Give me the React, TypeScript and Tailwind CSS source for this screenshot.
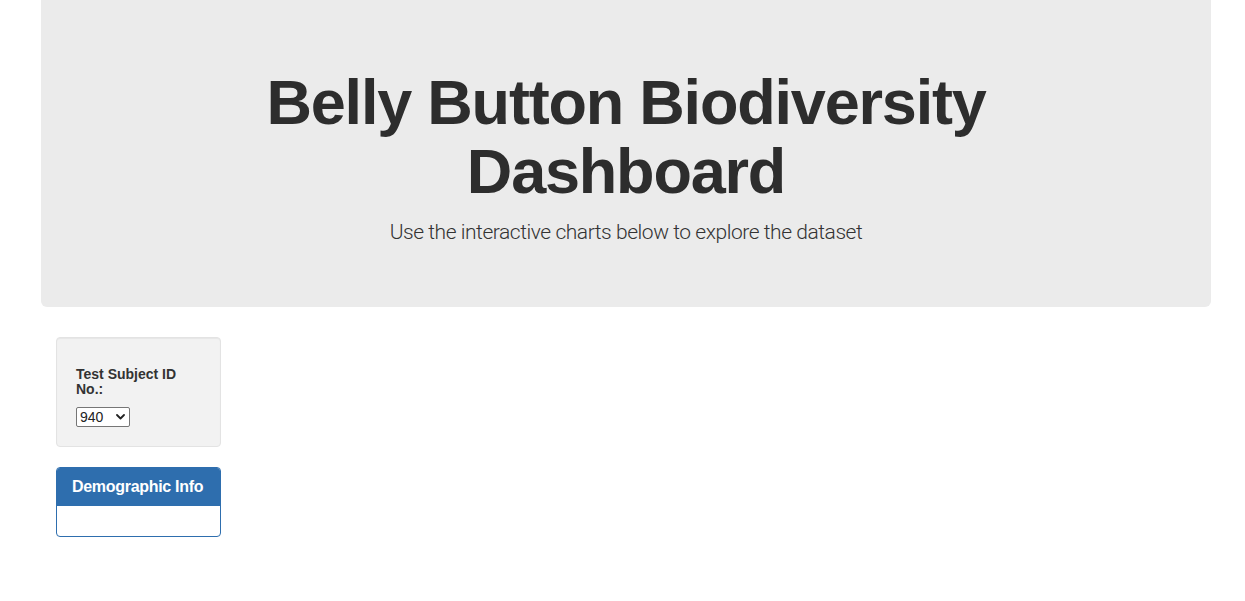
import React from "react";

export default function App() {
  return (
    <div
      className="min-h-[601px] bg-white text-[#333333]"
      style={{ fontFamily: '"Liberation Sans", Arial, sans-serif' }}
    >
      <div className="ml-[41px] w-[1170px]">
        <div className="rounded-b-[6px] bg-[#ebebeb] px-[60px] pt-[48px] pb-[45px] text-center">
          <h1 className="mt-[20px] mb-[10px] text-[63px] leading-[1.1] font-bold tracking-[-1.2px] text-[#2d2d2d]">
            Belly Button Biodiversity
            <br />
            Dashboard
          </h1>
          <p
            className="mb-[15px] text-[21px] leading-[30px] font-light tracking-[-0.45px] text-[#333333]"
            style={{ fontFamily: 'Roboto, "Liberation Sans", sans-serif' }}
          >
            Use the interactive charts below to explore the dataset
          </p>
        </div>
        <div className="mt-[30px] flex px-[15px]">
          <div className="w-[165px]">
            <div className="mb-[20px] rounded-[4px] border border-[#e3e3e3] bg-[#f2f2f2] p-[19px] shadow-[inset_0_1px_1px_rgba(0,0,0,0.05)]">
              <h5 className="mt-[10px] mb-[10px] text-[14px] leading-[1.1] font-bold text-[#333333]">
                Test Subject ID No.:
              </h5>
              <div className="relative flex h-[20px] w-[54px]">
                <select
                  defaultValue="940"
                  className="h-[20px] w-[54px] appearance-none rounded-[2px] border border-[#767676] bg-white pl-[3px] text-[14px] leading-[18px] text-[#222222] outline-none"
                >
                  <option value="940">940</option>
                  <option value="941">941</option>
                  <option value="943">943</option>
                </select>
                <svg
                  className="pointer-events-none absolute top-[7px] right-[5px]"
                  width="9"
                  height="6"
                  viewBox="0 0 9 6"
                >
                  <path
                    d="M1 1 L4.5 4.5 L8 1"
                    fill="none"
                    stroke="#222"
                    strokeWidth="1.8"
                    strokeLinecap="round"
                    strokeLinejoin="round"
                  />
                </svg>
              </div>
            </div>
            <div className="rounded-[4px] border border-[#2e6eae] bg-white">
              <div className="rounded-t-[3px] bg-[#2e6eae] px-[15px] py-[10px]">
                <h3 className="text-[16px] leading-[1.1] font-bold tracking-[-0.3px] whitespace-nowrap text-white">
                  Demographic Info
                </h3>
              </div>
              <div className="h-[30px] p-[15px]"></div>
            </div>
          </div>
        </div>
      </div>
    </div>
  );
}
